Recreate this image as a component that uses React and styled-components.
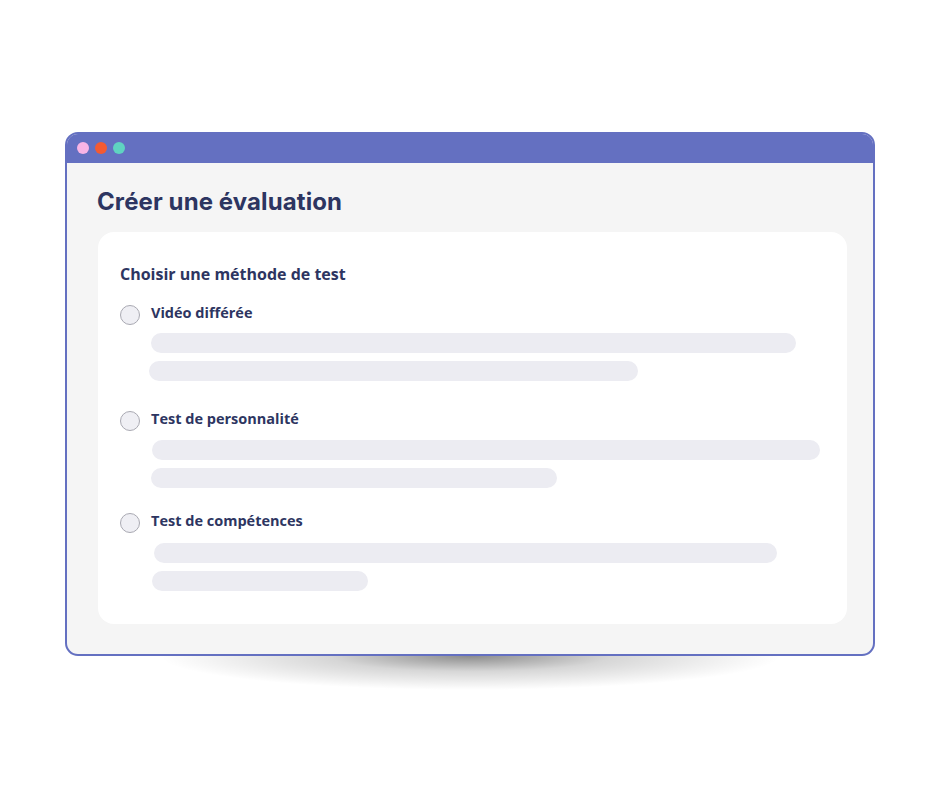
import React from "react";
import styled, { createGlobalStyle } from "styled-components";

const GlobalStyle = createGlobalStyle`
  html, body {
    margin: 0;
    padding: 0;
    background: #ffffff;
  }
  body {
    font-family: "Open Sans", "Noto Sans", sans-serif;
  }
`;

const Page = styled.div`
  width: 940px;
  height: 788px;
  padding: 132px 0 0 65px;
  box-sizing: border-box;
`;

const Window = styled.div`
  width: 810px;
  height: 524px;
  box-sizing: border-box;
  border: 2px solid #6470c1;
  border-radius: 13px;
  background: #f5f5f5;
  display: flex;
  flex-direction: column;
  overflow: hidden;
`;

const TitleBar = styled.div`
  height: 29px;
  flex-shrink: 0;
  background: #6470c1;
  display: flex;
  align-items: center;
  gap: 6px;
  padding: 0 0 2px 10px;
  box-sizing: border-box;
`;

const Dot = styled.span`
  width: 12px;
  height: 12px;
  border-radius: 50%;
  background: ${(p) => p.color};
`;

const Body = styled.div`
  flex: 1;
  display: flex;
  flex-direction: column;
  padding: 25px 26px 30px 31px;
`;

const Title = styled.h1`
  margin: 0 0 16px -1px;
  font-family: "Inter", "Noto Sans", sans-serif;
  font-weight: 700;
  font-size: 24px;
  line-height: 28px;
  letter-spacing: 0.1px;
  color: #2d3561;
`;

const Card = styled.div`
  flex: 1;
  background: #ffffff;
  border-radius: 16px;
  padding: 32px 27px 0 22px;
`;

const Subtitle = styled.h2`
  margin: 0 0 19px;
  font-size: 16px;
  font-weight: 700;
  line-height: 20px;
  color: #2d3561;
`;

const Option = styled.div`
  margin-bottom: ${(p) => p.$after}px;
`;

const OptionHead = styled.label`
  display: flex;
  align-items: center;
  gap: 11px;
  height: 20px;
  margin-bottom: ${(p) => p.$gap}px;
`;

const Radio = styled.span`
  width: 18px;
  height: 18px;
  border-radius: 50%;
  border: 1px solid #a9a9b2;
  background: #efeff4;
  flex-shrink: 0;
  transform: translateY(2px);
`;

const Label = styled.span`
  font-size: 14.5px;
  font-weight: 700;
  line-height: 20px;
  color: #2d3561;
`;

const Bars = styled.div`
  display: flex;
  flex-direction: column;
  gap: 8px;
`;

const Bar = styled.div`
  height: 20px;
  border-radius: 10px;
  background: #ececf2;
`;

const Shadow = styled.div`
  width: 620px;
  height: 34px;
  margin-left: 95px;
  background: radial-gradient(
    ellipse 50% 100% at 50% 0%,
    rgba(0, 0, 0, 0.45) 0%,
    rgba(0, 0, 0, 0.16) 45%,
    rgba(0, 0, 0, 0) 100%
  );
`;

const options = [
  {
    label: "Vidéo différée",
    gap: 10,
    after: 28,
    bars: [
      { left: 31, width: 645 },
      { left: 29, width: 489 },
    ],
  },
  {
    label: "Test de personnalité",
    gap: 11,
    after: 23,
    bars: [
      { left: 32, width: 668 },
      { left: 31, width: 406 },
    ],
  },
  {
    label: "Test de compétences",
    gap: 12,
    after: 0,
    bars: [
      { left: 34, width: 623 },
      { left: 32, width: 216 },
    ],
  },
];

const App = () => {
  return (
    <>
      <GlobalStyle />
      <Page>
        <Window>
          <TitleBar>
            <Dot color="#f8b4e6" />
            <Dot color="#f45a32" />
            <Dot color="#5fd3c1" />
          </TitleBar>
          <Body>
            <Title>Créer une évaluation</Title>
            <Card>
              <Subtitle>Choisir une méthode de test</Subtitle>
              {options.map((opt) => (
                <Option key={opt.label} $after={opt.after}>
                  <OptionHead $gap={opt.gap}>
                    <Radio />
                    <Label>{opt.label}</Label>
                  </OptionHead>
                  <Bars>
                    {opt.bars.map((b, i) => (
                      <Bar
                        key={i}
                        style={{ marginLeft: b.left, width: b.width }}
                      />
                    ))}
                  </Bars>
                </Option>
              ))}
            </Card>
          </Body>
        </Window>
        <Shadow />
      </Page>
    </>
  );
};

export default App;
